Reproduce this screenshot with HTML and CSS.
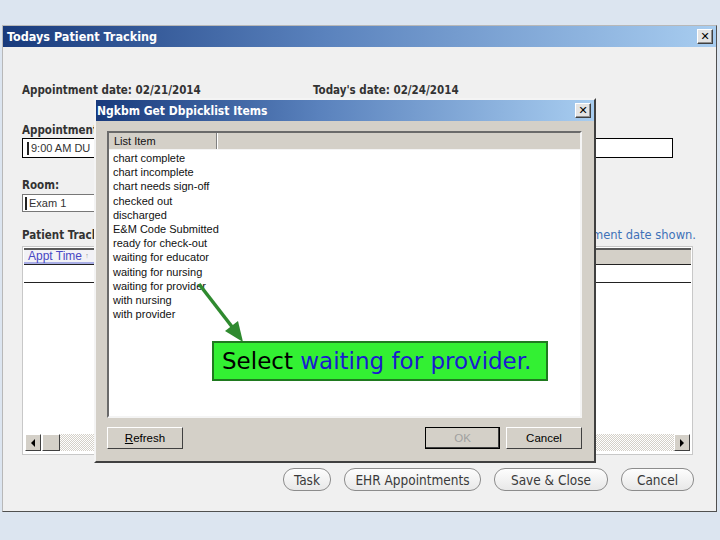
FILE: index.html
```html
<!DOCTYPE html>
<html lang="en">

<head>
    <meta charset="UTF-8">
    <title>Todays Patient Tracking</title>
    <link rel="stylesheet" href="styles.css">
</head>

<body>

    <div class="window">
        <div class="titlebar">
            <span>Todays Patient Tracking</span>
            <div class="close-btn">&#x2715;</div>
        </div>

        <div class="window-body">
            <div class="date-row">
                <span class="date-left">Appointment date: 02/21/2014</span>
                <span>Today's date: 02/24/2014</span>
            </div>

            <div class="field-label appt-label">Appointment:</div>
            <div class="field-box appt-box"><span class="caret"></span>9:00 AM DU</div>

            <div class="field-label room-label">Room:</div>
            <div class="field-box room-box"><span class="caret"></span>Exam 1</div>

            <div class="track-row">
                <span class="field-label">Patient Tracking:</span>
                <span class="hint">Patients listed are for the appointment date shown.</span>
            </div>

            <div class="track-table">
                <div class="track-head">
                    <div class="head-cell">Appt Time <span class="sort">&#x2191;</span></div>
                </div>
                <div class="track-line"></div>
                <div class="track-fill"></div>
                <div class="hscroll">
                    <div class="sb-btn"><span class="tri-left"></span></div>
                    <div class="sb-thumb"></div>
                    <div class="sb-track"></div>
                    <div class="sb-btn"><span class="tri-right"></span></div>
                </div>
            </div>

            <div class="button-row">
                <button class="pill task">Task</button>
                <button class="pill ehr">EHR Appointments</button>
                <button class="pill save">Save &amp; Close</button>
                <button class="pill cancel">Cancel</button>
            </div>
        </div>
    </div>

    <div class="picklist">
        <div class="titlebar dlg-title">
            <span>Ngkbm Get Dbpicklist Items</span>
            <div class="close-btn">&#x2715;</div>
        </div>
        <div class="dlg-body">
            <div class="listbox">
                <div class="list-head">
                    <div class="list-col">List Item</div>
                </div>
                <ul class="items">
                    <li>chart complete</li>
                    <li>chart incomplete</li>
                    <li>chart needs sign-off</li>
                    <li>checked out</li>
                    <li>discharged</li>
                    <li>E&amp;M Code Submitted</li>
                    <li>ready for check-out</li>
                    <li>waiting for educator</li>
                    <li>waiting for nursing</li>
                    <li>waiting for provider</li>
                    <li>with nursing</li>
                    <li>with provider</li>
                </ul>
            </div>
            <div class="dlg-buttons">
                <button class="win-btn"><u>R</u>efresh</button>
                <div class="spacer"></div>
                <button class="win-btn default" disabled>OK</button>
                <button class="win-btn">Cancel</button>
            </div>
        </div>
    </div>

    <svg class="arrow" width="720" height="540" viewBox="0 0 720 540">
        <line x1="199" y1="284" x2="233" y2="328" stroke="#2f8a2f" stroke-width="3.5" />
        <polygon points="243,342 238,321 225,331" fill="#2f8a2f" />
    </svg>

    <div class="callout">Select <span class="blue">waiting for provider.</span></div>

</body>

</html>
```

FILE: styles.css
```css
body {
    margin: 0;
    padding: 25px 0 0 2px;
    background: #dce5f0;
    font-family: "DejaVu Sans", sans-serif;
    width: 720px;
    height: 540px;
    box-sizing: border-box;
    overflow: hidden;
    position: relative;
}

.window {
    width: 715px;
    height: 487px;
    box-sizing: border-box;
    background: #f0f0f0;
    border: 1px solid #b8b8b8;
    border-right-color: #505050;
    border-bottom-color: #505050;
}

.titlebar {
    height: 21px;
    background: linear-gradient(to right, #183a7c, #5a82bd 45%, #a8cdf0);
    color: white;
    font-family: "DejaVu Sans Condensed", "DejaVu Sans", sans-serif;
    font-weight: bold;
    font-size: 12.5px;
    display: flex;
    align-items: center;
    justify-content: space-between;
    padding: 0 3px 0 4px;
}

.close-btn {
    width: 14px;
    height: 13px;
    background: #e4e4e4;
    border: 1px solid #fff;
    border-right-color: #404040;
    border-bottom-color: #404040;
    box-shadow: inset -1px -1px 0 #909090;
    color: #000;
    font-family: "DejaVu Sans", sans-serif;
    font-size: 11px;
    line-height: 13px;
    text-align: center;
    font-weight: bold;
}

.window-body {
    padding: 0 23px 0 19px;
    color: #333;
}

.date-row {
    margin-top: 36px;
    display: flex;
    font-family: "DejaVu Sans Condensed", "DejaVu Sans", sans-serif;
    font-weight: bold;
    font-size: 11.5px;
    line-height: 14px;
}

.date-left {
    width: 291px;
}

.field-label {
    font-family: "DejaVu Sans Condensed", "DejaVu Sans", sans-serif;
    font-weight: bold;
    font-size: 11.5px;
    line-height: 14px;
}

.appt-label {
    margin-top: 26px;
}

.field-box {
    background: white;
    border: 1px solid #000;
    box-sizing: border-box;
    font-family: "Liberation Sans", sans-serif;
    font-size: 11px;
    display: flex;
    align-items: center;
    color: #333;
    white-space: nowrap;
}

.caret {
    width: 2px;
    height: 13px;
    background: #222;
    margin: 0 2px 0 4px;
}

.appt-box {
    margin-top: 1px;
    width: 651px;
    height: 20px;
}

.room-label {
    margin-top: 20px;
}

.room-box {
    margin-top: 2px;
    width: 240px;
    height: 18px;
    border-color: #777;
}

.room-box .caret {
    margin-left: 2px;
}

.track-row {
    margin-top: 16px;
    display: flex;
    justify-content: space-between;
    margin-right: -3px;
}

.hint {
    color: #3f72b8;
    font-size: 11.5px;
    line-height: 14px;
}

.track-table {
    margin-top: 4px;
    width: 671px;
    height: 209px;
    box-sizing: border-box;
    border: 1px solid #c8c8c8;
    background: white;
    display: flex;
    flex-direction: column;
    padding: 1px 1px 3px 1px;
}

.track-head {
    height: 17px;
    box-sizing: border-box;
    background: #d4d0c8;
    border-top: 2px solid #5a5a5a;
    border-bottom: 1px solid #222;
    display: flex;
}

.head-cell {
    width: 68px;
    background: #f2f2f6;
    border-bottom: 2px solid #a9aee6;
    color: #4848c4;
    font-family: "Liberation Sans", sans-serif;
    font-size: 12px;
    line-height: 12px;
    padding-left: 4px;
    white-space: nowrap;
}

.sort {
    font-size: 7px;
    vertical-align: top;
    color: #888;
}

.track-line {
    height: 17px;
    border-bottom: 1px solid #222;
}

.track-fill {
    flex: 1;
}

.hscroll {
    height: 17px;
    display: flex;
    margin: 0 1px;
}

.sb-btn,
.sb-thumb {
    width: 16px;
    height: 17px;
    box-sizing: border-box;
    background: #d4d0c8;
    border: 1px solid #fff;
    border-right-color: #404040;
    border-bottom-color: #404040;
    display: flex;
    align-items: center;
    justify-content: center;
}

.sb-thumb {
    width: 18px;
    margin-left: 1px;
}

.sb-track {
    flex: 1;
    background-image: repeating-conic-gradient(#d4d0c8 0 25%, #ffffff 0 50%);
    background-size: 2px 2px;
}

.tri-left {
    border-right: 4px solid #000;
    border-top: 4px solid transparent;
    border-bottom: 4px solid transparent;
}

.tri-right {
    border-left: 4px solid #000;
    border-top: 4px solid transparent;
    border-bottom: 4px solid transparent;
}

.button-row {
    margin-top: 13px;
    display: flex;
    justify-content: flex-end;
    gap: 13px;
    margin-right: -1px;
}

.pill {
    height: 23px;
    padding: 0;
    border: 1px solid #8c8c8c;
    border-radius: 11px;
    background: linear-gradient(#fdfdfd, #e8e8e8);
    color: #3a3a3a;
    font-family: "DejaVu Sans Condensed", "DejaVu Sans", sans-serif;
    font-size: 13.5px;
}

.task {
    width: 48px;
}

.ehr {
    width: 137px;
}

.save {
    width: 114px;
}

.cancel {
    width: 73px;
}

.picklist {
    position: absolute;
    left: 94px;
    top: 98px;
    width: 502px;
    height: 365px;
    box-sizing: border-box;
    background: #d4d0c8;
    border: 2px solid #f4f4f4;
    border-right-color: #404040;
    border-bottom-color: #404040;
}

.dlg-title {
    padding-left: 1px;
    font-size: 12px;
}

.dlg-body {
    padding: 10px 0 0 11px;
}

.listbox {
    width: 475px;
    height: 287px;
    box-sizing: border-box;
    background: white;
    border: 2px solid #6a6a6a;
    border-right-color: #f4f4f4;
    border-bottom-color: #f4f4f4;
    font-family: "Liberation Sans", sans-serif;
    font-size: 11px;
    color: #111;
}

.list-head {
    height: 16px;
    background: #d4d0c8;
    border-bottom: 1px solid #f4f4f4;
    display: flex;
}

.list-col {
    width: 102px;
    padding: 2px 0 0 5px;
    line-height: 13px;
    border-right: 1px solid #808080;
    box-shadow: 1px 0 0 #fff;
    overflow: hidden;
}

.items {
    list-style: none;
    margin: 1px 0 0 0;
    padding: 0 0 0 4px;
}

.items li {
    height: 14.2px;
    line-height: 14px;
}

.dlg-buttons {
    margin-top: 9px;
    width: 475px;
    display: flex;
    gap: 6px;
}

.spacer {
    flex: 1;
}

.win-btn {
    width: 76px;
    height: 22px;
    box-sizing: border-box;
    background: #d4d0c8;
    border: 1px solid #fff;
    border-right-color: #404040;
    border-bottom-color: #404040;
    font-family: "Liberation Sans", sans-serif;
    font-size: 11.5px;
    color: #000;
    padding: 0;
}

.win-btn.default {
    outline: 1px solid #000;
    outline-offset: -1px;
    border-width: 1px;
    width: 75px;
    color: #a0a0a0;
    box-shadow: inset -1px -1px 0 #404040;
}

.arrow {
    position: absolute;
    left: 0;
    top: 0;
}

.callout {
    position: absolute;
    left: 212px;
    top: 341px;
    width: 336px;
    height: 40px;
    box-sizing: border-box;
    background: #33f033;
    border: 2px solid #1f7a1f;
    font-family: "DejaVu Sans", sans-serif;
    font-size: 23px;
    line-height: 36px;
    padding-left: 8px;
    color: #000;
    white-space: nowrap;
}

.blue {
    color: #1a1ad0;
}
```
